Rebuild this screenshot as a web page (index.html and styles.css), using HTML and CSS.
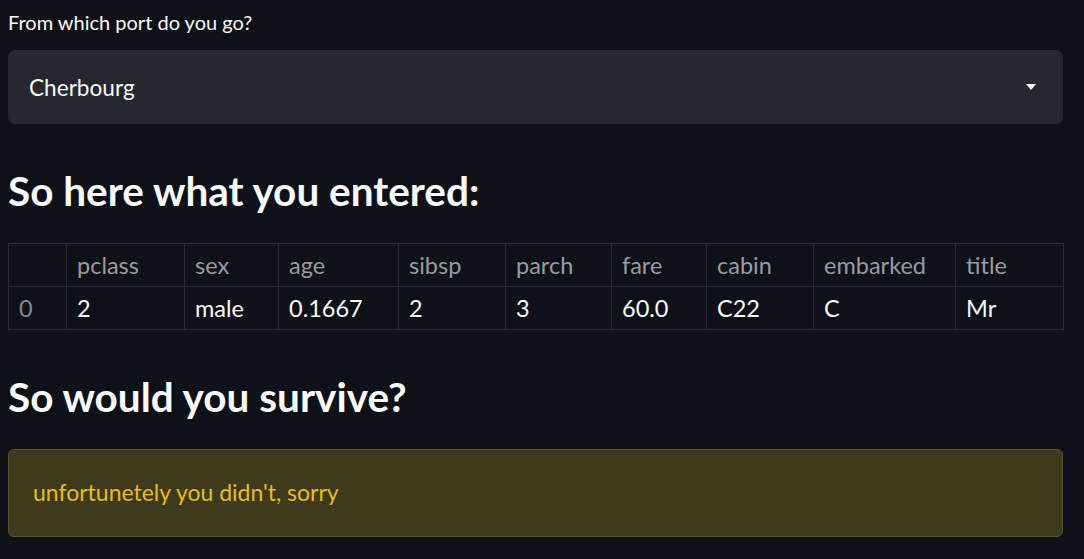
FILE: index.html
```html
<!DOCTYPE html>
<html>
<head>
<meta charset="utf-8">
<link rel="stylesheet" href="styles.css">
</head>
<body>
<main class="page">
  <label class="label">From which port do you go?</label>
  <div class="select">
    <span class="select-value">Cherbourg</span>
    <svg class="caret" width="10" height="6" viewBox="0 0 10 6"><path d="M0 0 H10 L5 6 Z" fill="#fafafa"/></svg>
  </div>
  <h2 class="heading h-first">So here what you entered:</h2>
  <table class="df">
    <thead>
      <tr><th></th><th>pclass</th><th>sex</th><th>age</th><th>sibsp</th><th>parch</th><th>fare</th><th>cabin</th><th>embarked</th><th>title</th></tr>
    </thead>
    <tbody>
      <tr><th>0</th><td>2</td><td>male</td><td>0.1667</td><td>2</td><td>3</td><td>60.0</td><td>C22</td><td>C</td><td>Mr</td></tr>
    </tbody>
  </table>
  <h2 class="heading h-second">So would you survive?</h2>
  <div class="alert">unfortunetely you didn't, sorry</div>
</main>
</body>
</html>
```

FILE: styles.css
```css
html, body {
  margin: 0;
  padding: 0;
  background: #0e1117;
}
body {
  font-family: "Source Sans Pro", "Lato", "Noto Sans", sans-serif;
  color: #fafafa;
}
.page {
  padding: 0 21px 0 8px;
  display: flex;
  flex-direction: column;
}
.label {
  display: block;
  margin-top: 10px;
  font-size: 20px;
  line-height: 24px;
  color: #fafafa;
}
.select {
  margin-top: 16px;
  height: 74px;
  background: #262730;
  border-radius: 7px;
  display: flex;
  align-items: center;
  justify-content: space-between;
  padding: 0 27px 0 21px;
}
.select-value {
  font-size: 22.6px;
}
.caret {
  display: block;
}
.heading {
  margin: 0;
  font-weight: 700;
  font-size: 40.5px;
  line-height: 48px;
}
.h-first {
  margin-top: 43px;
  margin-bottom: 28px;
}
.h-second {
  margin-top: 43px;
  margin-bottom: 28px;
}
.df {
  border-collapse: collapse;
  table-layout: fixed;
  width: 1055px;
  font-size: 23.5px;
}
.df th, .df td {
  box-sizing: border-box;
  border: 1px solid #2a2c33;
  height: 43px;
  padding: 0 10px 1px;
  text-align: left;
  font-weight: 400;
  white-space: nowrap;
}
.df thead th {
  color: #9a9ba0;
}
.df tbody th {
  color: #8a8b90;
}
.df td {
  color: #fafafa;
}
.df th:nth-child(1) { width: 58px; }
.df th:nth-child(2) { width: 118px; }
.df th:nth-child(3) { width: 94px; }
.df th:nth-child(4) { width: 120px; }
.df th:nth-child(5) { width: 107px; }
.df th:nth-child(6) { width: 106px; }
.df th:nth-child(7) { width: 95px; }
.df th:nth-child(8) { width: 107px; }
.df th:nth-child(9) { width: 142px; }
.df th:nth-child(10) { width: 108px; }
.alert {
  height: 88px;
  box-sizing: border-box;
  background: #3e3a1c;
  border: 1px solid #5e5426;
  border-radius: 6px;
  display: flex;
  align-items: center;
  padding: 0 24px 2px;
  font-size: 23px;
  color: #e8bd1e;
}
```
